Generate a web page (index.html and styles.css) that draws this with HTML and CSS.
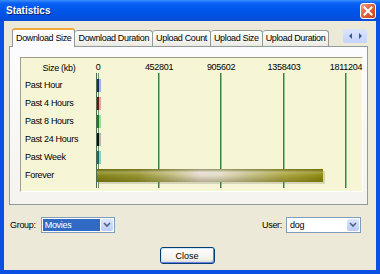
FILE: index.html
```html
<!DOCTYPE html>
<html lang="en">
<head>
  <meta charset="UTF-8" />
  <title>Statistics</title>
  <link rel="stylesheet" href="styles.css">
</head>
<body>
  <div class="window">
    <div class="titlebar">
      <span class="title">Statistics</span>
      <button class="title-close" aria-label="Close">
        <svg width="10" height="10" viewBox="0 0 10 10"><path d="M1.5 1.5 L8.5 8.5 M8.5 1.5 L1.5 8.5" stroke="#fff" stroke-width="2" stroke-linecap="square"/></svg>
      </button>
    </div>

    <div class="dialog">
      <div class="tabs">
        <div class="tab active">Download Size</div>
        <div class="tab">Download Duration</div>
        <div class="tab">Upload Count</div>
        <div class="tab">Upload Size</div>
        <div class="tab">Upload Duration</div>
        <div class="tab-scroll">
          <svg width="4" height="6" viewBox="0 0 4 6"><path d="M3 0 L0 3 L3 6 Z" fill="#3b5998"/></svg>
          <svg width="4" height="6" viewBox="0 0 4 6"><path d="M1 0 L4 3 L1 6 Z" fill="#3b5998"/></svg>
        </div>
      </div>

      <div class="tab-panel">
        <div class="chart">
          <div class="gridlines">
            <span class="gridline zero" style="left:-1px"></span>
            <span class="gridline" style="left:61px"></span>
            <span class="gridline" style="left:123px"></span>
            <span class="gridline" style="left:186px"></span>
            <span class="gridline" style="left:248px"></span>
          </div>

          <div class="chart-head">Size (kb)</div>
          <div class="axis">
            <span class="tick" style="left:1px">0</span>
            <span class="tick" style="left:62px">452801</span>
            <span class="tick" style="left:124px">905602</span>
            <span class="tick" style="left:187px">1358403</span>
            <span class="tick" style="left:249px">1811204</span>
          </div>

          <div class="row-label">Past Hour</div>
          <div class="row-bar"><span class="bar bar-hour" style="width:4px"></span></div>
          <div class="row-label">Past 4 Hours</div>
          <div class="row-bar"><span class="bar bar-4h" style="width:4px"></span></div>
          <div class="row-label">Past 8 Hours</div>
          <div class="row-bar"><span class="bar bar-8h" style="width:4px"></span></div>
          <div class="row-label">Past 24 Hours</div>
          <div class="row-bar"><span class="bar bar-24h" style="width:4px"></span></div>
          <div class="row-label">Past Week</div>
          <div class="row-bar"><span class="bar bar-week" style="width:4px"></span></div>
          <div class="row-label">Forever</div>
          <div class="row-bar"><span class="bar bar-forever" style="width:226px"></span></div>
        </div>
      </div>

      <div class="filters">
        <label class="field-label">Group:</label>
        <div class="combo combo-group">
          <span class="combo-value selected">Movies</span>
          <span class="combo-btn">
            <svg width="8" height="6" viewBox="0 0 8 6"><path d="M1 1 L4 4 L7 1" fill="none" stroke="#4d6185" stroke-width="1.6"/></svg>
          </span>
        </div>
        <span class="spacer"></span>
        <label class="field-label">User:</label>
        <div class="combo combo-user">
          <span class="combo-value">dog</span>
          <span class="combo-btn">
            <svg width="8" height="6" viewBox="0 0 8 6"><path d="M1 1 L4 4 L7 1" fill="none" stroke="#4d6185" stroke-width="1.6"/></svg>
          </span>
        </div>
      </div>

      <div class="actions">
        <button class="btn default">Close</button>
      </div>
    </div>
  </div>
</body>
</html>
```

FILE: styles.css
```css
:root {
  --xp-face: #ece9d8;
  --xp-frame: #0a50e2;
  --xp-tab-border: #919b9c;
  --xp-combo-border: #7f9db9;
  --xp-select: #316ac5;
  --chart-bg: #f6f5d6;
  --grid-dark: #3f823f;
  --grid-light: #93c393;
}
* { box-sizing: border-box; margin: 0; padding: 0; }
body {
  width: 380px; height: 274px; overflow: hidden;
  font-family: "Liberation Sans", Arial, sans-serif;
  font-size: 9px; letter-spacing: -0.3px; color: #000;
}
.window {
  width: 380px; height: 274px;
  display: flex; flex-direction: column;
  background: var(--xp-frame);
}
.titlebar {
  height: 21px; flex: none;
  display: flex; align-items: center; justify-content: space-between;
  padding: 0 4px 0 6px;
  background: linear-gradient(#3b8fff 0, #0b62f3 3px, #0058ee 8px, #0052e3 15px, #0a4cd8 21px);
}
.title {
  color: #fff; font-weight: 700; font-size: 10px; letter-spacing: 0;
  text-shadow: 1px 1px 0 #0a1f70;
}
.title-close {
  width: 16px; height: 16px; border: 1px solid #fff; border-radius: 3px;
  background: linear-gradient(135deg, #f0a486 0%, #e2643c 45%, #c8401a 100%);
  display: flex; align-items: center; justify-content: center;
}
.dialog {
  flex: 1; margin: 0 4px 4px;
  background: var(--xp-face);
  padding: 7px 8px 0 5px;
  display: flex; flex-direction: column;
}

/* tabs */
.tabs {
  display: flex; align-items: flex-end; height: 18px;
  padding-left: 3px; position: relative; z-index: 1;
}
.tab {
  height: 16px; padding: 0 3px; line-height: 15px;
  letter-spacing: -0.35px;
  border: 1px solid var(--xp-tab-border); border-bottom: none; border-left: none;
  border-radius: 3px 3px 0 0;
  background: linear-gradient(#ffffff, #f3f2ec 70%, #e9e8e1);
  white-space: nowrap;
}
.tab:first-child { border-left: 1px solid var(--xp-tab-border); }
.tab.active {
  height: 19px; margin-bottom: -1px; line-height: 17px;
  border: 1px solid var(--xp-tab-border); border-bottom: none;
  border-top: 2px solid #f2a93b;
  background: #fcfcfe;
}
.tab-scroll {
  margin: 0 1px 3px auto; width: 24px; height: 14px;
  display: flex; align-items: center; justify-content: center; gap: 5px;
  background: linear-gradient(#dbe5fd, #c3d3fb);
  border-radius: 2px;
}
.tab-panel {
  height: 159px;
  border: 1px solid var(--xp-tab-border);
  background: linear-gradient(#fcfcfe, #f4f3ee);
  padding: 10px 4px 0 10px;
}

/* chart */
.chart {
  position: relative; height: 135px;
  background: var(--chart-bg);
  border: 1px solid; border-color: #a09f8a #ffffff #ffffff #a09f8a;
  padding-top: 2px;
  display: grid;
  grid-template-columns: 76px 1fr;
  grid-template-rows: 16px repeat(6, 18px);
  align-content: start;
}
.gridlines {
  position: absolute; top: 15px; bottom: 3px; left: 76px; right: 0;
}
.gridline {
  position: absolute; top: 0; bottom: 0; width: 2px;
  background: linear-gradient(90deg, var(--grid-dark) 50%, var(--grid-light) 50%);
}
.gridline.zero {
  width: 3px;
  background: linear-gradient(90deg, #4f6e4f 33%, #f6f5d8 33% 66%, #6f8f6f 66%);
}
.chart-head {
  text-align: center; line-height: 16px;
}
.axis { position: relative; }
.tick {
  position: absolute; top: 0; line-height: 14px;
  transform: translateX(-50%);
}
.row-label {
  padding-left: 4px; line-height: 18px; white-space: nowrap;
}
.row-bar {
  display: flex; align-items: center; position: relative; z-index: 1;
}
.bar { display: block; height: 13px; }
.bar-hour { background: linear-gradient(90deg, #1c2a66 50%, #9fb2e6 50%); }
.bar-4h { background: linear-gradient(90deg, #6e1616 50%, #e2a3a3 50%); }
.bar-8h { background: linear-gradient(90deg, #1c7a24 50%, #a4d6a4 50%); }
.bar-24h { background: linear-gradient(90deg, #111111 50%, #b4b4b4 50%); }
.bar-week { background: linear-gradient(90deg, #1d6a6a 50%, #92c9c6 50%); }
.bar-forever {
  background:
    linear-gradient(rgba(70, 70, 0, 0.5) 0, rgba(255, 255, 255, 0.2) 25%, rgba(255, 255, 255, 0) 50%, rgba(60, 60, 0, 0.3) 100%),
    linear-gradient(90deg, #84841a 0%, #969430 18%, #c2bd82 34%, #e6dcd0 46%, #e2dcc6 54%, #c8c290 66%, #aca644 82%, #8e8a10 100%);
  box-shadow: 2px 2px 0 rgba(120, 120, 90, 0.25);
}

/* filters */
.filters {
  display: flex; align-items: center;
  margin-top: 12px; padding: 0 7px 0 1px;
}
.field-label { margin-right: 5px; }
.spacer { flex: 1; }
.combo {
  height: 16px; width: 74px;
  border: 1px solid var(--xp-combo-border); background: #fff;
  display: flex; align-items: stretch; padding: 1px;
}
.combo-user { width: 75px; margin-left: -1px; }
.combo-value {
  flex: 1; line-height: 12px; padding-left: 2px;
}
.combo-value.selected { background: var(--xp-select); color: #fff; }
.combo-btn {
  width: 12px; margin-left: 1px;
  display: flex; align-items: center; justify-content: center;
  background: linear-gradient(#dce6fd, #b9cbf7);
  border-radius: 2px;
}

/* buttons */
.actions {
  display: flex; justify-content: center;
  margin-top: 14px; padding-right: 3px;
}
.btn {
  width: 55px; height: 17px;
  font-family: inherit; font-size: 9px; color: #000;
  border: 1px solid #003c74; border-radius: 3px;
  background: linear-gradient(#ffffff, #f0efe7 80%, #d6d0c5);
}
.btn.default {
  box-shadow: inset 1px 1px 0 #cee7ff, inset -1px -1px 0 #6982ee;
}
```
